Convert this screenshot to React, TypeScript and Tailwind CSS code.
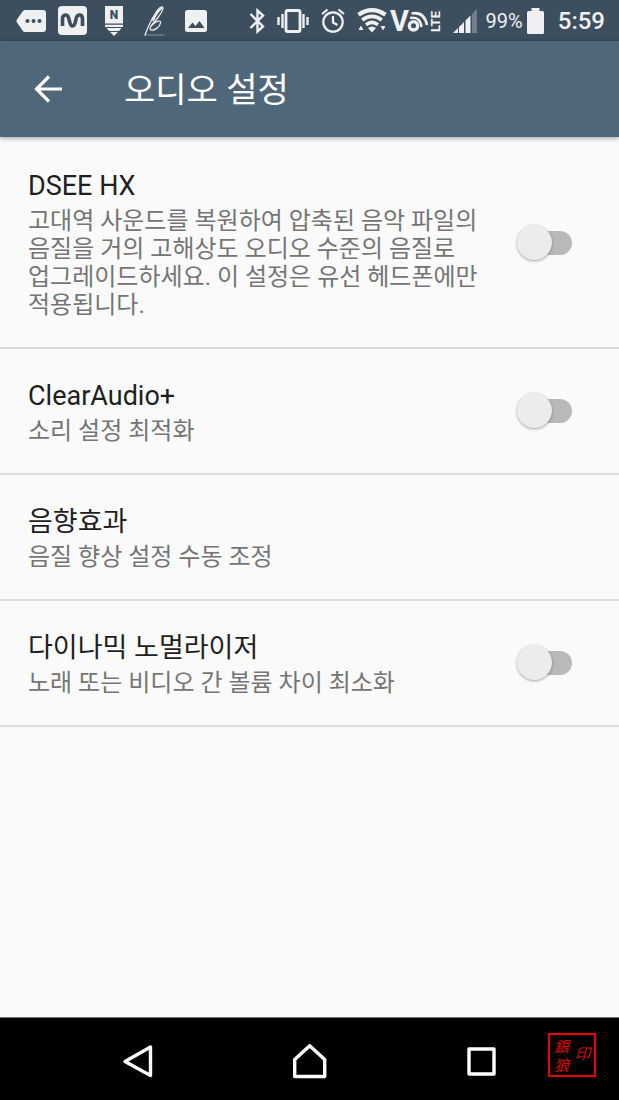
import { useState } from 'react';

const settings = [
  {
    id: 'dsee',
    title: 'DSEE HX',
    text: '고대역 사운드를 복원하여 압축된 음악 파일의 음질을 거의 고해상도 오디오 수준의 음질로 업그레이드하세요. 이 설정은 유선 헤드폰에만 적용됩니다.',
    toggle: true,
  },
  { id: 'clear', title: 'ClearAudio+', text: '소리 설정 최적화', toggle: true },
  { id: 'effects', title: '음향효과', text: '음질 향상 설정 수동 조정', toggle: false },
  { id: 'normalizer', title: '다이나믹 노멀라이저', text: '노래 또는 비디오 간 볼륨 차이 최소화', toggle: true },
];

function NotificationIcons() {
  return (
    <div className="flex items-center text-[#eef0f1]">
      <svg width="30" height="24" viewBox="0 0 30 24" fill="currentColor" aria-hidden="true">
        <path d="M9 1H27Q30 1 30 4V20Q30 23 27 23H9Q7.5 23 6.5 21.5L.8 13.2Q0 12 .8 10.8L6.500 2.500Q7.500 1 9 1Z" />
        <g fill="#3d4f5e">
          <circle cx="11.500" cy="12" r="2" />
          <circle cx="17.500" cy="12" r="2" />
          <circle cx="23.500" cy="12" r="2" />
        </g>
      </svg>
      <svg className="ml-3" width="29" height="29" viewBox="0 0 29 29" aria-hidden="true">
        <rect width="29" height="29" rx="4" fill="currentColor" />
        <path
          d="M4.500 20V13Q4.500 9 7.500 9Q9.800 9 10.500 11.500L12 17Q12.900 20 14.500 20Q16.100 20 17 17L18.500 11.500Q19.200 9 21.500 9Q24.500 9 24.500 13V20"
          fill="none"
          stroke="#3d4f5e"
          strokeWidth="3.600"
        />
      </svg>
      <svg className="ml-[18px]" width="18" height="30" viewBox="0 0 18 30" fill="currentColor" aria-hidden="true">
        <path d="M0 0H18V17.500H0ZM0 18.800H18V21H0ZM1.500 22H16.500L14 25H4ZM5 26H13L9 30Z" />
        <text x="9" y="13" textAnchor="middle" fill="#3d4f5e" className="font-['Roboto'] text-[12px] font-black">N</text>
      </svg>
      <svg className="ml-[21px]" width="22" height="30" viewBox="0 0 22 30" fill="none" stroke="currentColor" strokeLinecap="round" aria-hidden="true">
        <path d="M1 29C4 21 7 14 11 8C14 3 17 0 18.500 1C20 2.500 17 8 11 15L7 20C13 14 17 14 16.500 17C16 21 10 25 7 24C5.500 23 6 21 8 19" strokeWidth="1.300" />
        <path d="M9 14C12 8 15 4 18 2" strokeWidth="2" />
        <path d="M1 29H20" strokeWidth=".7" opacity=".6" />
      </svg>
      <svg className="ml-[19px]" width="22" height="22" viewBox="0 0 22 22" aria-hidden="true">
        <rect width="22" height="22" rx="2.500" fill="currentColor" />
        <path d="M3 18L7.500 12.500L10.500 16L14.500 11L19.500 18Z" fill="#3d4f5e" />
      </svg>
    </div>
  );
}

function SystemIcons() {
  return (
    <div className="flex items-center text-[#eef0f1]">
      <svg width="17" height="26" viewBox="0 0 17 26" fill="none" stroke="currentColor" strokeWidth="2.400" aria-hidden="true">
        <path d="M1.500 6L14 18.500L8.500 23.500V2.500L14 7.500L1.500 20" />
      </svg>
      <svg className="ml-[11px]" width="32" height="24" viewBox="0 0 32 24" fill="none" stroke="currentColor" strokeWidth="2.400" aria-hidden="true">
        <rect x="9" y="1.500" width="14" height="21" rx="1.500" strokeWidth="2.800" />
        <path d="M5.500 5V19M1.500 8V16M26.500 5V19M30.500 8V16" />
      </svg>
      <svg className="ml-3" width="24" height="25" viewBox="0 0 24 25" fill="none" stroke="currentColor" strokeWidth="2.200" aria-hidden="true">
        <circle cx="12" cy="14" r="9.700" />
        <path d="M1 6L6.500 1.500M23 6L17.500 1.500M12 8V14.500L16.500 17" />
      </svg>
      <svg className="ml-3" width="30" height="25" viewBox="0 0 30 25" fill="none" stroke="currentColor" aria-hidden="true">
        <path d="M1.500 6.800Q15 -2.500 28.500 6.800" strokeWidth="4.200" />
        <path d="M5.200 12Q15 4.800 24.800 12" strokeWidth="3.800" />
        <path d="M9 16.800Q15 12 21 16.800" strokeWidth="3.600" />
        <path d="M11 20Q15 17 19 20L15 24.500Z M4 17.500L6.500 22H1.500ZM23.500 18H28.500L26 22.500Z" fill="currentColor" stroke="none" />
      </svg>
      <svg className="ml-[3px]" width="53" height="38" viewBox="0 -6 53 38" fill="none" stroke="currentColor" aria-hidden="true">
        <text x="0" y="23" fill="currentColor" stroke="none" className="font-['Roboto'] text-[29px] font-bold">V</text>
        <circle cx="23.500" cy="17.800" r="4.200" strokeWidth="3.400" />
        <path d="M20 10Q30 8 31.500 19M21.500 5.500Q34 3 37 17" strokeWidth="2.600" />
        <text x="0" y="0" transform="translate(50 24) rotate(-90)" fill="currentColor" stroke="none" className="font-['Roboto'] text-[13px] font-bold">LTE</text>
      </svg>
      <svg className="ml-[10px]" width="25" height="24" viewBox="0 0 25 24" fill="currentColor" aria-hidden="true">
        <path d="M0 24L5 19V24ZM6 18L11 13V24H6ZM12.500 11.500L17.500 6.500V24H12.500Z" />
        <path d="M19 5L24 0V24H19Z" opacity=".3" />
      </svg>
      <span className="ml-2 font-['Roboto',sans-serif] text-[20px] leading-6">99%</span>
      <svg className="ml-1" width="17" height="26" viewBox="0 0 17 26" fill="currentColor" aria-hidden="true">
        <path d="M4.500 0H12.500V3H15.500Q17 3 17 4.500V24.500Q17 26 15.500 26H1.500Q0 26 0 24.500V4.500Q0 3 1.500 3H4.500Z" />
      </svg>
      <span className="ml-[14px] font-['Roboto',sans-serif] text-[24px] font-medium leading-7">5:59</span>
    </div>
  );
}

function Switch({ id, label }: { id: string; label: string }) {
  const [on, setOn] = useState(false);
  return (
    <label htmlFor={id} className="flex w-[55px] shrink-0 cursor-pointer items-center pb-[3px]">
      <input id={id} type="checkbox" role="switch" aria-label={label} checked={on} onChange={() => setOn(!on)} className="peer sr-only" />
      <span className="flex h-6 w-full items-center rounded-full bg-linear-to-r from-transparent from-30% to-[#b9b9b9] to-30% peer-checked:justify-end peer-checked:from-[#8fa3b3] peer-checked:to-[#8fa3b3]">
        <span className="size-[35px] rounded-full bg-[#ececec] shadow-[0_1px_3px_rgba(0,0,0,0.35)]" />
      </span>
    </label>
  );
}

export default function App() {
  return (
    <div className="flex min-h-screen flex-col bg-[#fafafa] font-['Roboto','Noto_Sans_CJK_KR',sans-serif]">
      <div className="flex h-[41px] items-center justify-between bg-[#3d4f5e] pl-4 pr-[14px]">
        <NotificationIcons />
        <SystemIcons />
      </div>
      <header className="flex h-24 items-center bg-[#50677a] pl-[34px] text-white shadow-[0_1px_5px_rgba(0,0,0,0.4)]">
        <button type="button" aria-label="뒤로" className="cursor-pointer">
          <svg width="28" height="28" viewBox="0 0 28 28" fill="none" stroke="currentColor" strokeWidth="3.200" aria-hidden="true">
            <path d="M15 1.500L2.500 14L15 26.500M2.500 14H28" />
          </svg>
        </button>
        <h1 className="ml-[62px] pt-0.5 text-[34px] font-normal leading-10">오디오 설정</h1>
      </header>
      <main className="flex-1 pt-0.5">
        <ul>
          {settings.map((s) => (
            <li key={s.id} className="flex items-center justify-between border-b-2 border-[#dcdcdc] pb-7 pl-7 pr-[47px] pt-[30px]">
              <div className="max-w-[460px]">
                <h2 className="text-[27px] font-normal leading-[34px] text-[#1f1f1f]">{s.title}</h2>
                <p className="mt-1 break-keep text-[24px] leading-7 text-[#757575]">{s.text}</p>
              </div>
              {s.toggle && <Switch id={s.id} label={s.title} />}
            </li>
          ))}
        </ul>
      </main>
      <nav className="relative flex h-[83px] items-center justify-center border-t border-[#777777] bg-black pt-[5px] text-white">
        <div className="flex w-[378px] items-center justify-between">
          <button type="button" aria-label="이전" className="cursor-pointer">
            <svg width="34" height="36" viewBox="0 0 34 36" fill="none" stroke="currentColor" strokeWidth="3.400" strokeLinejoin="round" aria-hidden="true">
              <path d="M29.500 3V31.500L4 17.500Z" />
            </svg>
          </button>
          <button type="button" aria-label="홈" className="cursor-pointer">
            <svg width="34" height="36" viewBox="0 0 34 36" fill="none" stroke="currentColor" strokeWidth="3.400" strokeLinejoin="round" aria-hidden="true">
              <path d="M1.700 32.500V15.500L16.700 1.700L31.700 15.500V32.500Z" />
            </svg>
          </button>
          <button type="button" aria-label="최근 앱" className="cursor-pointer">
            <svg width="34" height="36" viewBox="0 0 34 36" fill="none" stroke="currentColor" strokeWidth="3.400" strokeLinejoin="round" aria-hidden="true">
              <rect x="4" y="5" width="25" height="25" />
            </svg>
          </button>
        </div>
        <div className="absolute right-[23px] top-[15px] flex h-11 w-12 items-center justify-between border-2 border-[#f00000] px-1 font-['Noto_Sans_CJK_TC',sans-serif] text-[15px] leading-4 text-[#e60000]">
          <span className="flex flex-col gap-[3px] italic">
            <span>銀</span>
            <span>狼</span>
          </span>
          <span className="pb-1 italic">印</span>
        </div>
      </nav>
    </div>
  );
}
